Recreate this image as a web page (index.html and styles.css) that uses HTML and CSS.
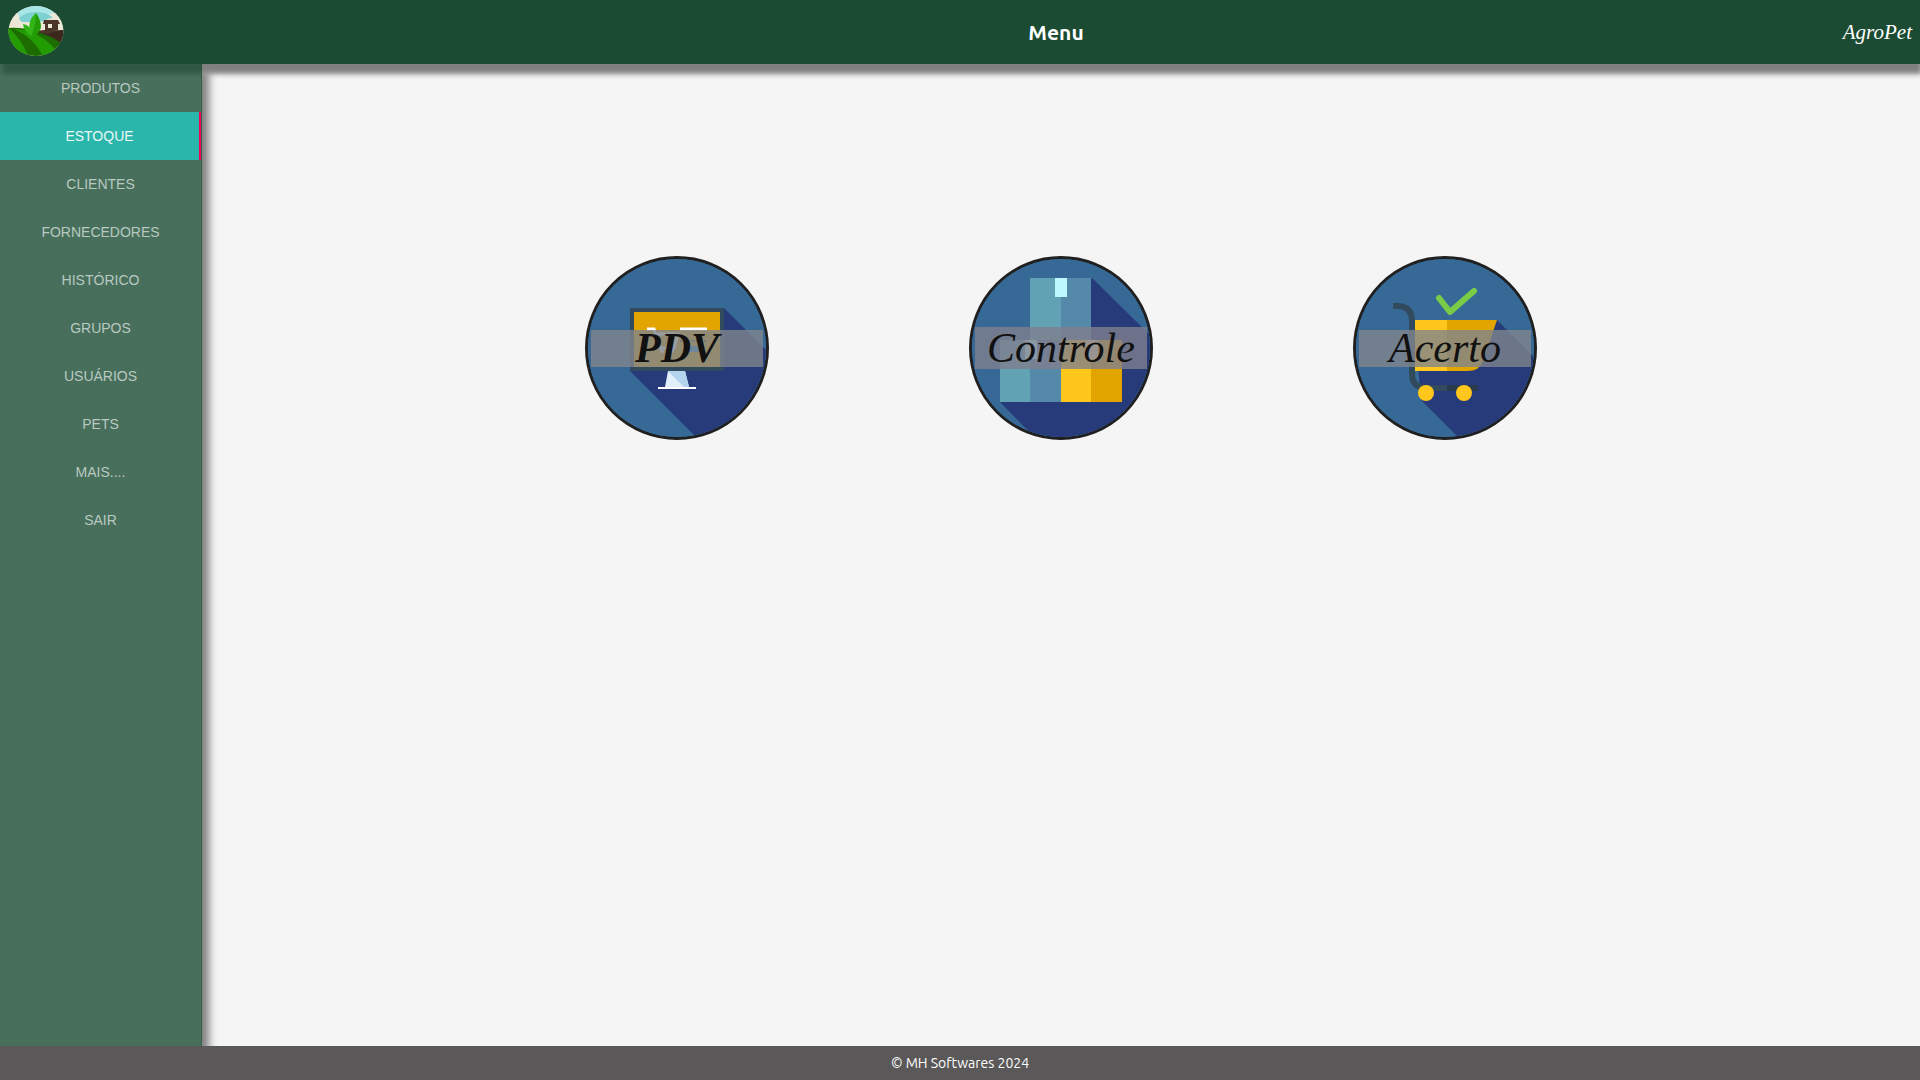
FILE: index.html
```
<!DOCTYPE html>
<html lang="pt-BR">
<head>
<meta charset="utf-8">
<meta name="viewport" content="width=device-width, initial-scale=1">
<title>Menu</title>
<link rel="stylesheet" href="styles.css">
</head>
<body>
<header class="topbar">
  <svg class="logo" viewBox="0 0 56 50" aria-hidden="true">
    <defs><clipPath id="logo-clip"><ellipse cx="28" cy="25" rx="27.5" ry="25"/></clipPath></defs>
    <g clip-path="url(#logo-clip)">
      <rect width="56" height="50" fill="#ebe8d8"/>
      <path d="M10 0h36v7q-6 0-8 6-4 4-8 3H15q-5-5-5-10z" fill="#a8e6e6"/>
      <path d="M11 12q6-6 17-6 12 0 17 6-6 0-8 3l-8 1H14q-3-2-3-4z" fill="#7fd0d2"/>
      <path d="M28 25l28-1v16H40z" fill="#3b281d"/>
      <path d="M36 14h14l2 4h-2v6l-12 2h-1v-8h-2z" fill="#4b3528"/>
      <path d="M28 25l9-1 13 1-12 3z" fill="#4b3528"/>
      <path d="M40 18h4v4h-4z" fill="#ebe8d8"/>
      <path d="M0 22q14-1 26 3 16 4 27 12L48 50H0z" fill="#1d6c00"/>
      <path d="M0 22l3 2q12 12 17 26H0z" fill="#239b03"/>
      <path d="M6 23l12 1q22 8 31 22l-14 4Q25 31 6 23z" fill="#239b03"/>
      <path d="M23 30q-7-4-8-12 6 1 8 6z" fill="#32b516"/>
      <path d="M23 30q-5-15 5-23 10 16-1 22-2 1-4 1z" fill="#32b516"/>
      <path d="M28 7q10 16-1 22l-4 1q5-10 5-23z" fill="#249c08"/>
    </g>
  </svg>
  <h1 class="page-title">Menu</h1>
  <span class="brand">AgroPet</span>
</header>

<div class="layout">
  <nav class="sidebar">
    <a class="nav-link" href="#produtos">Produtos</a>
    <a class="nav-link nav-link-active" href="#estoque">Estoque</a>
    <a class="nav-link" href="#clientes">Clientes</a>
    <a class="nav-link" href="#fornecedores">Fornecedores</a>
    <a class="nav-link" href="#historico">Histórico</a>
    <a class="nav-link" href="#grupos">Grupos</a>
    <a class="nav-link" href="#usuarios">Usuários</a>
    <a class="nav-link" href="#pets">Pets</a>
    <a class="nav-link" href="#mais">Mais....</a>
    <a class="nav-link" href="#sair">Sair</a>
  </nav>

  <main class="content">
    <button class="tile" type="button">
      <svg class="tile-art" viewBox="0 0 178 178" aria-hidden="true">
        <rect width="178" height="178" fill="#376996"/>
        <path d="M136 49l50 50v90h-67L42 112z" fill="#273b7a"/>
        <rect x="42" y="49" width="94" height="63" fill="#324a5e"/>
        <rect x="46" y="53" width="86" height="55" fill="#e2a500"/>
        <path d="M59 70h7l6 19h14l4-14H69M92 70h27" fill="none" stroke="#fff" stroke-width="3"/>
        <path d="M92 82h27" stroke="#324a5e" stroke-width="2" stroke-dasharray="2 2"/>
        <circle cx="74" cy="92" r="2" fill="#fff"/><circle cx="84" cy="92" r="2" fill="#fff"/>
        <path d="M97 87h16v6H97z" fill="#278dcb"/>
        <path d="M80 112h17l4 16H77z" fill="#e1effa"/>
        <path d="M80 112h17l4 16h-5z" fill="#b4d3ee"/>
        <rect x="70" y="128" width="38" height="2" fill="#fff"/>
      </svg>
      <span class="tile-label tile-label-bold">PDV</span>
    </button>
    <button class="tile" type="button">
      <svg class="tile-art" viewBox="0 0 178 178" aria-hidden="true">
        <rect width="178" height="178" fill="#376996"/>
        <path d="M120 19l66 65v105H73l-45-46z" fill="#273b7a"/>
        <rect x="58" y="19" width="31" height="62" fill="#61a2b4"/>
        <rect x="89" y="19" width="30" height="62" fill="#5489a9"/>
        <rect x="83" y="19" width="12" height="19" fill="#bdf8ff"/>
        <rect x="28" y="81" width="31" height="62" fill="#61a2b4"/>
        <rect x="58" y="81" width="31" height="62" fill="#5489a9"/>
        <rect x="53" y="81" width="12" height="19" fill="#bdf8ff"/>
        <rect x="89" y="81" width="31" height="62" fill="#ffc61b"/>
        <rect x="119" y="81" width="31" height="62" fill="#e2a500"/>
        <rect x="114" y="81" width="12" height="19" fill="#ffe7a0"/>
      </svg>
      <span class="tile-label tile-label-tall">Controle</span>
    </button>
    <button class="tile" type="button">
      <svg class="tile-art" viewBox="0 0 178 178" aria-hidden="true">
        <rect width="178" height="178" fill="#376996"/>
        <path d="M141 61l50 50v80h-76l-50-50-7-80z" fill="#273b7a"/>
        <path d="M37 47h4q15 0 15 15v53q0 14 15 14h20" fill="none" stroke="#324a5e" stroke-width="6"/>
        <path d="M91 129h31" stroke="#2b3b4e" stroke-width="6"/>
        <path d="M59 61h32v51H59z" fill="#ffc61b"/>
        <path d="M91 61h50l-14 41q-3 10-16 10H91z" fill="#e2a500"/>
        <circle cx="70" cy="134" r="8" fill="#ffc61b"/><circle cx="108" cy="134" r="8" fill="#ffc61b"/>
        <path d="M83 39l11 14 24-21" fill="none" stroke="#7acb47" stroke-width="6" stroke-linecap="round" stroke-linejoin="round"/>
      </svg>
      <span class="tile-label">Acerto</span>
    </button>
  </main>
</div>

<footer class="footer">© MH Softwares 2024</footer>
</body>
</html>
```
FILE: styles.css
```
* {
  box-sizing: border-box;
}

body {
  margin: 0;
  min-height: 100vh;
  display: flex;
  flex-direction: column;
  background: #f5f5f5;
  font-family: Ubuntu, "Noto Sans", sans-serif;
}

.topbar {
  display: grid;
  grid-template-columns: 272px 1fr 80px;
  align-items: center;
  height: 64px;
  padding: 0 8px;
  background: #1b4b32;
  color: #fff;
  box-shadow: 2px 10px 5px #808080;
}

.logo {
  width: 56px;
  height: 50px;
  margin-bottom: 2px;
}

.page-title {
  margin: 0;
  font-size: 21px;
  line-height: 28px;
  text-align: center;
}

.brand {
  font: italic 21px/28px "Liberation Serif", serif;
  text-align: right;
}

.layout {
  flex: 1;
  display: flex;
}

.sidebar {
  width: 202px;
  border-right: 1px solid rgba(27, 77, 52, 0.4);
  background: rgba(27, 77, 52, 0.8);
  box-shadow: 7px 7px 8px #808080;
}

.nav-link {
  display: block;
  height: 48px;
  color: #b9c9c1;
  font: 14px/48px "Liberation Sans", sans-serif;
  text-align: center;
  text-decoration: none;
  text-transform: uppercase;
}

.nav-link-active {
  border-right: 2px solid #f7045a;
  background: #2bb6ab;
  color: #eaf8f7;
}

.content {
  flex: 1;
  display: flex;
  flex-wrap: wrap;
  justify-content: center;
  align-content: flex-start;
  gap: 48px 200px;
  padding: 192px 16px 48px;
}

.tile {
  display: grid;
  place-items: center;
  width: 184px;
  height: 184px;
  padding: 0;
  overflow: hidden;
  border: 3px solid #202020;
  border-radius: 50%;
  background: #376996;
  cursor: pointer;
}

.tile-art,
.tile-label {
  grid-area: 1 / 1;
}

.tile-art {
  width: 178px;
  height: 178px;
}

.tile-label {
  width: 172px;
  background: rgba(127, 132, 141, 0.8);
  color: #111;
  font: italic 42px/37px "Lucida Calligraphy", "Liberation Serif", serif;
}

.tile-label-bold {
  font-weight: bold;
}

.tile-label-tall {
  background: rgba(127, 127, 141, 0.8);
  line-height: 42px;
}

.footer {
  position: relative;
  height: 34px;
  background: #5a5858;
  color: #fff;
  font-size: 14px;
  line-height: 34px;
  text-align: center;
}
```
